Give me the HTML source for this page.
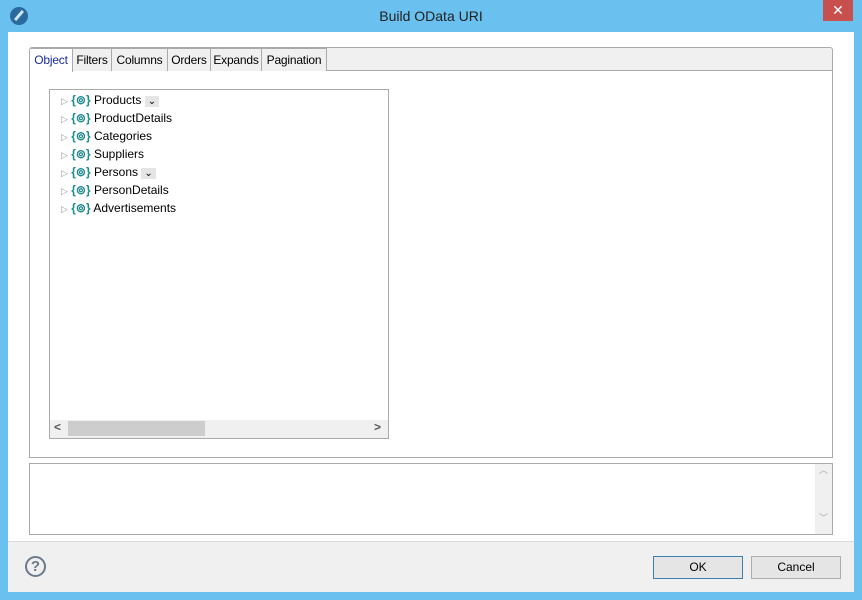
<!DOCTYPE html>
<html><head><style>
*{margin:0;padding:0;box-sizing:border-box}
body{width:862px;height:600px;background:#6ac0ee;position:relative;font-family:"Liberation Sans",sans-serif;font-size:12px;color:#000;overflow:hidden}
.abs{position:absolute}
.title{left:0;top:8px;width:862px;text-align:center;font-size:14px;color:#222}
.client{left:8px;top:32px;width:846px;height:560px;background:#fff}
.foot{left:8px;top:541px;width:846px;height:51px;background:#f0f0f0;border-top:1px solid #dadada}
.tab{top:48px;height:23px;line-height:22px;border:1px solid #aaa;border-bottom:none;border-left:none;background:#f0f0f0;font-size:12px;text-align:center;letter-spacing:-0.2px;white-space:nowrap}
.item{left:61px;height:18px;line-height:18px;white-space:nowrap}
.btn{top:556px;width:90px;height:23px;border:1px solid #adadad;background:#e5e5e5;text-align:center;line-height:21px;font-size:12px}
</style></head><body>
<div class="abs" style="left:10px;top:7px;width:18px;height:18px;border-radius:50%;background:#2a6a9e"></div>
<div class="abs" style="left:13px;top:14px;width:12px;height:3px;background:#cfe6f5;transform:rotate(-50deg)"></div>
<div class="abs title">Build OData URI</div>
<div class="abs" style="left:823px;top:0;width:30px;height:21px;background:#c7504f;color:#fff;text-align:center;line-height:21px;font-size:14px">✕</div>
<div class="abs client"></div>
<div class="abs" style="left:29px;top:70px;width:804px;height:388px;border:1px solid #aaa"></div>
<div class="abs" style="left:29px;top:47px;width:804px;height:24px;border:1px solid #aaa;border-radius:3px 3px 0 0;background:#f0f0f0"></div>
<div class="abs tab" style="left:30px;width:43px;height:24px;background:#fff;color:#1a2c9c">Object</div>
<div class="abs tab" style="left:73px;width:39px">Filters</div>
<div class="abs tab" style="left:112px;width:56px">Columns</div>
<div class="abs tab" style="left:168px;width:43px">Orders</div>
<div class="abs tab" style="left:211px;width:51px">Expands</div>
<div class="abs tab" style="left:262px;width:65px">Pagination</div>
<div class="abs" style="left:49px;top:89px;width:340px;height:350px;border:1px solid #aaa"></div>
<div class="abs" style="left:50px;top:420px;width:338px;height:18px;background:#f0f0f0"></div>
<div class="abs" style="left:68px;top:421px;width:137px;height:15px;background:#cdcdcd"></div>
<div class="abs" style="left:54px;top:420px;font-size:12px;color:#555;font-weight:bold">&lt;</div>
<div class="abs" style="left:374px;top:420px;font-size:12px;color:#555;font-weight:bold">&gt;</div>
<div class="abs item" style="top:91px"><span style="color:#999;font-size:9px">▷</span> <b style="color:#1d8a90">{⊚}</b> Products <span style="background:#e5e5e5;padding:0 3px;font-size:10px">⌄</span></div>
<div class="abs item" style="top:109px"><span style="color:#999;font-size:9px">▷</span> <b style="color:#1d8a90">{⊚}</b> ProductDetails</div>
<div class="abs item" style="top:127px"><span style="color:#999;font-size:9px">▷</span> <b style="color:#1d8a90">{⊚}</b> Categories</div>
<div class="abs item" style="top:145px"><span style="color:#999;font-size:9px">▷</span> <b style="color:#1d8a90">{⊚}</b> Suppliers</div>
<div class="abs item" style="top:163px"><span style="color:#999;font-size:9px">▷</span> <b style="color:#1d8a90">{⊚}</b> Persons <span style="background:#e5e5e5;padding:0 3px;font-size:10px">⌄</span></div>
<div class="abs item" style="top:181px"><span style="color:#999;font-size:9px">▷</span> <b style="color:#1d8a90">{⊚}</b> PersonDetails</div>
<div class="abs item" style="top:199px"><span style="color:#999;font-size:9px">▷</span> <b style="color:#1d8a90">{⊚}</b> Advertisements</div>
<div class="abs" style="left:29px;top:463px;width:804px;height:72px;border:1px solid #aaa"></div>
<div class="abs" style="left:815px;top:464px;width:17px;height:70px;background:#f0f0f0;color:#aaa;text-align:center;font-size:9px;line-height:12px">︿<br><br><br><br>﹀</div>
<div class="abs foot"></div>
<div class="abs" style="left:25px;top:556px;width:21px;height:21px;border:2px solid #6a7a8a;border-radius:50%;text-align:center;line-height:17px;font-size:15px;font-weight:bold;color:#6a7a8a">?</div>
<div class="abs btn" style="left:653px;border-color:#3c7fb1">OK</div>
<div class="abs btn" style="left:751px">Cancel</div>
</body></html>
